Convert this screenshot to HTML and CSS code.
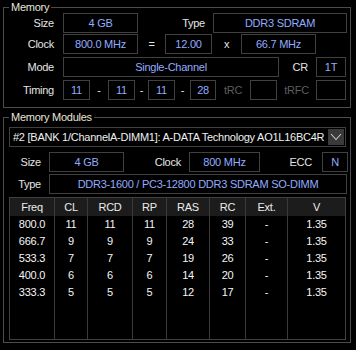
FILE: index.html
```html
<!DOCTYPE html>
<html>
<head>
<meta charset="utf-8">
<link rel="stylesheet" href="styles.css">
</head>
<body>
<div class="window">
  <fieldset class="group group-mem">
    <legend>Memory</legend>
    <div class="row r1">
      <span class="lbl w50">Size</span>
      <span class="box val ml9 w75">4 GB</span>
      <span class="lbl w67">Type</span>
      <span class="box val ml8 w134">DDR3 SDRAM</span>
    </div>
    <div class="row r2">
      <span class="lbl w50">Clock</span>
      <span class="box val ml9 w75">800.0 MHz</span>
      <span class="sym w27">=</span>
      <span class="box val w47">12.00</span>
      <span class="sym w29">x</span>
      <span class="box val w75">66.7 MHz</span>
    </div>
    <div class="row r3">
      <span class="lbl w50">Mode</span>
      <span class="box val ml9 w216">Single-Channel</span>
      <span class="lbl w37 pr8">CR</span>
      <span class="box val w30">1T</span>
    </div>
    <div class="row r4">
      <span class="lbl w50">Timing</span>
      <span class="box val ml9 w27">11</span>
      <span class="sym w18">-</span>
      <span class="box val w27">11</span>
      <span class="sym w13">-</span>
      <span class="box val w27">11</span>
      <span class="sym w15">-</span>
      <span class="box val w26">28</span>
      <span class="sym dim w34">tRC</span>
      <span class="box val w27"></span>
      <span class="sym dim w39">tRFC</span>
      <span class="box val w30"></span>
    </div>
  </fieldset>

  <fieldset class="group group-mod">
    <legend>Memory Modules</legend>
    <div class="select">
      <span class="select-text">#2 [BANK 1/ChannelA-DIMM1]: A-DATA Technology AO1L16BC4R</span>
      <span class="select-btn"><svg width="12" height="8" viewBox="0 0 12 8"><polyline points="1,1 6,6.5 11,1" fill="none" stroke="#c8c8c8" stroke-width="1.1"/></svg></span>
    </div>
    <div class="row m-r1">
      <span class="lbl w37">Size</span>
      <span class="box val ml8 w75">4 GB</span>
      <span class="lbl w57">Clock</span>
      <span class="box val ml8 w71">800 MHz</span>
      <span class="lbl w52">ECC</span>
      <span class="box val ml10 w26">N</span>
    </div>
    <div class="row m-r2">
      <span class="lbl w37">Type</span>
      <span class="box val ml8 w298">DDR3-1600 / PC3-12800 DDR3 SDRAM SO-DIMM</span>
    </div>
    <div class="timings">
      <div class="col c-freq"><div class="th">Freq</div><div class="td">800.0</div><div class="td">666.7</div><div class="td">533.3</div><div class="td">400.0</div><div class="td">333.3</div></div>
      <div class="col c-cl"><div class="th">CL</div><div class="td">11</div><div class="td">9</div><div class="td">7</div><div class="td">6</div><div class="td">5</div></div>
      <div class="col c-rcd"><div class="th">RCD</div><div class="td">11</div><div class="td">9</div><div class="td">7</div><div class="td">6</div><div class="td">5</div></div>
      <div class="col c-rp"><div class="th">RP</div><div class="td">11</div><div class="td">9</div><div class="td">7</div><div class="td">6</div><div class="td">5</div></div>
      <div class="col c-ras"><div class="th">RAS</div><div class="td">28</div><div class="td">24</div><div class="td">19</div><div class="td">14</div><div class="td">12</div></div>
      <div class="col c-rc"><div class="th">RC</div><div class="td">39</div><div class="td">33</div><div class="td">26</div><div class="td">20</div><div class="td">17</div></div>
      <div class="col c-ext"><div class="th">Ext.</div><div class="td">-</div><div class="td">-</div><div class="td">-</div><div class="td">-</div><div class="td">-</div></div>
      <div class="col c-v"><div class="th">V</div><div class="td">1.35</div><div class="td">1.35</div><div class="td">1.35</div><div class="td">1.35</div><div class="td">1.35</div></div>
    </div>
  </fieldset>
</div>
</body>
</html>
```

FILE: styles.css
```css
* { box-sizing: border-box; }
html, body {
  margin: 0;
  padding: 0;
  background: #000;
}
body {
  width: 356px;
  height: 350px;
  overflow: hidden;
  font-family: "Liberation Sans", Arial, sans-serif;
  font-size: 11px;
  letter-spacing: -0.25px;
  color: #e2e2e2;
}
.window {
  width: 356px;
  height: 350px;
  background: #000;
  display: flex;
  flex-direction: column;
}
.group {
  margin: 0 5px 0 3px;
  padding: 0;
  min-width: 0;
  border: 1px solid #4c4c4c;
}
.group legend {
  margin-left: 5px;
  padding: 0 2px;
  line-height: 12px;
  height: 12px;
  color: #e8e6dc;
}
.group-mem {
  margin-top: 1px;
  padding-bottom: 7px;
}
.group-mod {
  margin-top: 3px;
  padding-bottom: 2px;
}
.row {
  display: flex;
  align-items: center;
  height: 20px;
}
.r2 { margin-top: 1px; }
.r3 { margin-top: 3px; }
.r4 { margin-top: 3px; }
.lbl {
  text-align: right;
  white-space: nowrap;
  color: #e4e4e4;
}
.sym {
  text-align: center;
  color: #e4e4e4;
}
.dim { color: #5e5e5e; }
.pr8 { padding-right: 8px; }
.box {
  height: 20px;
  border: 1px solid #404040;
  background: #000;
  display: flex;
  align-items: center;
  justify-content: center;
  white-space: nowrap;
  overflow: hidden;
}
.val { color: #93acff; }
.ml8 { margin-left: 8px; }
.ml9 { margin-left: 9px; }
.ml10 { margin-left: 10px; }
.w13 { width: 13px; }
.w15 { width: 15px; }
.w18 { width: 18px; }
.w26 { width: 26px; }
.w27 { width: 27px; }
.w29 { width: 29px; }
.w30 { width: 30px; }
.w34 { width: 34px; }
.w37 { width: 37px; }
.w39 { width: 39px; }
.w47 { width: 47px; }
.w50 { width: 50px; }
.w52 { width: 52px; }
.w57 { width: 57px; }
.w67 { width: 67px; }
.w71 { width: 71px; }
.w75 { width: 75px; }
.w134 { width: 134px; }
.w216 { width: 216px; }
.w298 { width: 298px; }

.select {
  margin: 4px 0 0 5px;
  width: 337px;
  height: 20px;
  border: 1px solid #404040;
  display: flex;
  align-items: center;
  color: #f0f0f0;
}
.select-text {
  flex: 1;
  padding-left: 3px;
  white-space: nowrap;
  overflow: hidden;
}
.select-btn {
  width: 16px;
  height: 16px;
  margin-right: 1px;
  background: #3a3a3a;
  display: flex;
  align-items: center;
  justify-content: center;
}
.m-r1 { margin-top: 5px; }
.m-r2 { margin-top: 2px; }

.timings {
  margin: 3px 0 0 5px;
  width: 337px;
  height: 143px;
  border: 1px solid #404040;
  display: flex;
}
.col {
  display: flex;
  flex-direction: column;
  border-left: 1px solid #3a3a3a;
}
.c-freq { width: 44px; border-left: none; }
.c-cl { width: 33px; }
.c-rcd { width: 45px; }
.c-rp { width: 34px; }
.c-ras { width: 43px; }
.c-rc { width: 36px; }
.c-ext { width: 42px; }
.c-v { width: 58px; }
.th {
  height: 18px;
  line-height: 18px;
  background: #1c1c1c;
  text-align: center;
  color: #ececec;
}
.td {
  height: 17px;
  line-height: 17px;
  text-align: center;
  color: #f6f6f6;
}
```
